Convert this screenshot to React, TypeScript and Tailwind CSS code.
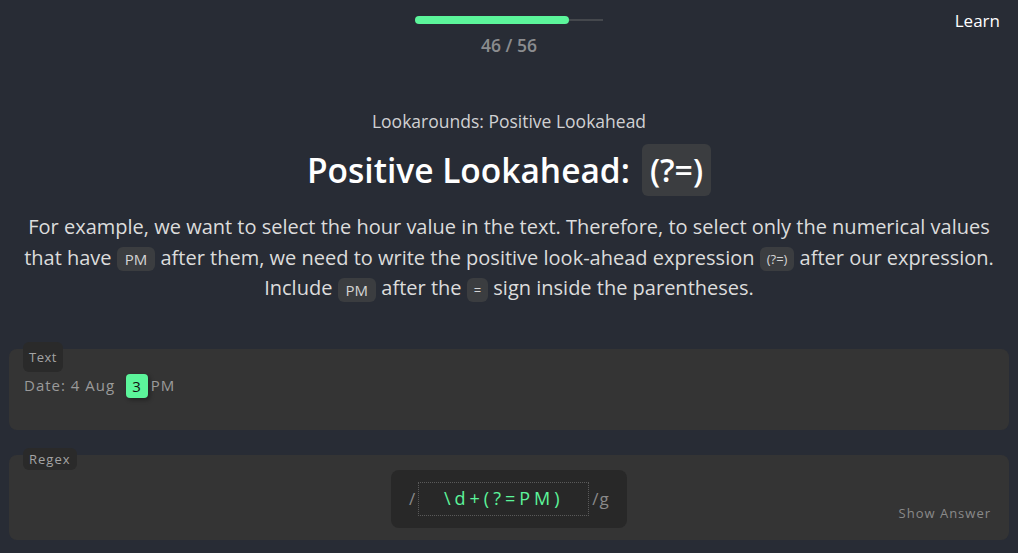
import React from "react";

const Code = ({ children, small }: { children: React.ReactNode; small?: boolean }) => (
  <span
    className={`inline-block rounded-md bg-[#3b3d40] align-middle leading-[24px] text-[#d4d4d4] ${
      small ? "px-[7px] text-[13px]" : "px-[8px] text-[15px]"
    }`}
  >
    {children}
  </span>
);

export default function App() {
  return (
    <div
      className="min-h-[553px] w-full bg-[#282c35] text-white"
      style={{ fontFamily: '"Open Sans", "Noto Sans", sans-serif' }}
    >
      <div className="relative flex flex-col items-center pt-[16px]">
        <div className="relative flex h-[8px] w-[188px] items-center">
          <div className="absolute left-0 right-0 top-[3px] h-[2px] bg-[#45484d]" />
          <div className="relative h-[8px] w-[154px] rounded-full bg-[#5cf59b]" />
        </div>
        <div className="mt-[9px] text-[17.5px] font-semibold leading-[24px] text-[#8b8c8f]">46 / 56</div>
        <div className="absolute right-[18px] top-[9px] text-[17px] leading-[24px] text-white">Learn</div>
      </div>

      <div className="mt-[52px] text-center text-[17.5px] leading-[24px] text-[#d0d1d3]">
        Lookarounds: Positive Lookahead
      </div>
      <div className="mt-[11px] flex items-center justify-center gap-[12px]">
        <span className="text-[33.5px] font-semibold leading-[52px] text-white">Positive Lookahead:</span>
        <span className="rounded-md bg-[#3b3d40] px-[8px] text-[32px] font-semibold leading-[52px] text-white">
          (?=)
        </span>
      </div>
      <p className="mx-auto mt-[16px] px-[20px] text-center text-[20px] leading-[30.5px] text-[#dcdcdc]">
        For example, we want to select the hour value in the text. Therefore, to select only the numerical values
        that have <Code>PM</Code> after them, we need to write the positive look-ahead expression{" "}
        <Code small>(?=)</Code> after our expression. Include <Code>PM</Code> after the <Code small>=</Code> sign
        inside the parentheses.
      </p>

      <div className="mt-[45px] px-[9px]">
        <div className="relative h-[81px] rounded-lg bg-[#343434]">
          <div className="absolute left-[14px] top-[-7px] rounded-md bg-[#2a2a2a] px-[6px] text-[13px] leading-[30px] tracking-[0.5px] text-[#a4a4a4]">
            Text
          </div>
          <div className="flex items-center pl-[15px] pt-[25px] text-[15px] tracking-[1px] text-[#9a9a9a]">
            <span>Date: 4 Aug</span>
            <span className="ml-[11px] mr-[3px] rounded-[4px] bg-[#5cf59b] px-[6px] leading-[24px] text-[#111] shadow-[2px_2px_4px_rgba(0,0,0,0.35)]">
              3
            </span>
            <span>PM</span>
          </div>
        </div>

        <div className="relative mt-[25px] h-[85px] rounded-lg bg-[#343434]">
          <div className="absolute left-[14px] top-[-7px] rounded-md bg-[#2a2a2a] px-[6px] text-[13px] leading-[22px] tracking-[1px] text-[#a4a4a4]">
            Regex
          </div>
          <div className="flex justify-center pt-[15px]">
            <div className="flex h-[58px] w-[236px] items-center rounded-lg bg-[#282828] pl-[18px]">
              <span className="text-[17px] text-[#8a8a8a]">/</span>
              <div className="ml-[3px] flex h-[34px] w-[171px] items-center justify-center border border-dotted border-[#5a5a5a] text-[18px] tracking-[4px] text-[#5cf59b]">
                \d+(?=PM)
              </div>
              <span className="ml-[3px] text-[17px] tracking-[1px] text-[#8a8a8a]">/g</span>
            </div>
          </div>
          <div className="absolute bottom-[16px] right-[18px] text-[13px] tracking-[1px] text-[#8a8a8a]">
            Show Answer
          </div>
        </div>
      </div>
    </div>
  );
}
